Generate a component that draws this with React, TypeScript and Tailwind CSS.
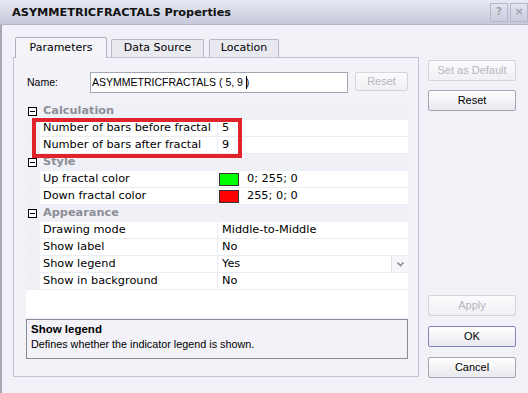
import React from "react";

const verdana = "font-['DejaVu_Sans',Verdana,sans-serif]";
const arial = "font-['Liberation_Sans',Arial,sans-serif]";

const Btn = ({ label, disabled, primary }: { label: string; disabled?: boolean; primary?: boolean }) => (
  <div
    className={`h-[21px] w-[88px] rounded-[2px] border flex items-center justify-center text-[11px] ${arial} ${
      disabled
        ? "border-[#d3d3dc] bg-gradient-to-b from-[#fbfbfd] to-[#f0f0f4] text-[#b6b6be]"
        : primary
        ? "border-[#8185bd] bg-gradient-to-b from-white to-[#e8e8f0] text-black"
        : "border-[#a3a5b3] bg-gradient-to-b from-white to-[#e8e8ee] text-black"
    }`}
  >
    {label}
  </div>
);

const Header = ({ title }: { title: string }) => (
  <div className="flex h-[17px] items-center bg-[#f0f0f7]">
    <div className="ml-[2px] flex h-[9px] w-[9px] items-center justify-center border border-black bg-white">
      <div className="h-px w-[5px] bg-black" />
    </div>
    <span className={`ml-[6px] text-[11.3px] font-bold text-[#8e8e96] ${verdana}`}>{title}</span>
  </div>
);

const Row = ({ name, children }: { name: string; children: React.ReactNode }) => (
  <div className="flex h-[17px] border-b border-[#ececf3]">
    <div className="w-[14px] bg-[#f0f0f7]" />
    <div className="w-[178px] border-r border-[#ececf3] bg-white pl-[3px] leading-[16px]">{name}</div>
    <div className="flex flex-1 items-center bg-white pl-[4px] leading-[16px]">{children}</div>
  </div>
);

const Swatch = ({ color }: { color: string }) => (
  <div className={`-ml-[3px] mr-[8px] h-[13px] w-[20px] border border-[#333] ${color}`} />
);

export default function App() {
  return (
    <div className="h-[393px] w-[528px] overflow-hidden bg-[#f1f1f7] text-black">
      {/* title bar */}
      <div className="flex h-[25px] items-center justify-between border-b border-[#b3b5c6] bg-gradient-to-b from-[#e8e9f2] to-[#c7c9dc]">
        <span className={`ml-[12px] pt-[2px] text-[11.3px] font-bold text-[#111] ${verdana}`}>
          ASYMMETRICFRACTALS Properties
        </span>
        <div className="flex gap-[2px] self-start pt-[3px]">
          <div className={`flex h-[19px] w-[18px] items-center justify-center border border-[#b5b7ca] text-[11px] font-bold text-[#a2a3b3] ${verdana}`}>
            ?
          </div>
          <div className={`flex h-[19px] w-[18px] items-center justify-center border border-[#b5b7ca] text-[11px] font-bold text-[#a2a3b3] ${verdana}`}>
            ×
          </div>
        </div>
      </div>

      <div className="flex h-[368px] border-l-2 border-[#a9a9b3]">
        {/* left column */}
        <div className="ml-[11px] mt-[12px] w-[406px]">
          {/* tabs */}
          <div className={`relative z-10 flex h-[21px] items-end text-[11px] ${verdana}`}>
            <div className="ml-[2px] flex h-[21px] w-[92px] items-center justify-center rounded-t-[2px] border border-b-0 border-[#aeb0c0] bg-[#f4f4f9]">
              Parameters
            </div>
            <div className="ml-[4px] mb-px flex h-[18px] w-[93px] items-center justify-center rounded-t-[2px] border border-b-0 border-[#b6b8c6] bg-[#e9e9f0]">
              Data Source
            </div>
            <div className="ml-[5px] mb-px flex h-[18px] w-[70px] items-center justify-center rounded-t-[2px] border border-b-0 border-[#b6b8c6] bg-[#e9e9f0]">
              Location
            </div>
          </div>

          {/* panel */}
          <div className="-mt-px h-[320px] border border-[#c3c4d0] bg-[#f2f2f8] pl-[12px] pt-[14px]">
            <div className="flex items-center">
              <span className={`ml-[1px] w-[63px] text-[10.5px] ${arial}`}>Name:</span>
              <div className={`flex h-[21px] w-[258px] items-center border border-[#a4a6b4] bg-white pl-[1px] text-[10.5px] ${arial}`}>
                ASYMMETRICFRACTALS ( 5, 9 )
                <span className="-ml-[3px] h-[13px] w-px bg-black" />
              </div>
              <div className={`ml-[7px] -mt-[2px] flex h-[19px] w-[53px] items-center justify-center rounded-[2px] border border-[#d3d3dc] bg-gradient-to-b from-[#fbfbfd] to-[#f0f0f4] text-[11px] text-[#b6b6be] ${arial}`}>
                Reset
              </div>
            </div>

            {/* property grid */}
            <div className={`relative mt-[10px] w-[382px] text-[11.3px] ${verdana}`}>
              <Header title="Calculation" />
              <Row name="Number of bars before fractal">5</Row>
              <Row name="Number of bars after fractal">9</Row>
              <Header title="Style" />
              <Row name="Up fractal color">
                <Swatch color="bg-[#00ff00]" />
                0; 255; 0
              </Row>
              <Row name="Down fractal color">
                <Swatch color="bg-[#ff0000]" />
                255; 0; 0
              </Row>
              <Header title="Appearance" />
              <Row name="Drawing mode">Middle-to-Middle</Row>
              <Row name="Show label">No</Row>
              <Row name="Show legend">
                <span className="flex-1">Yes</span>
                <div className="flex h-[16px] w-[17px] items-center justify-center border-l border-[#dcdce6] bg-[#f6f6fa]">
                  <svg width="7" height="5" viewBox="0 0 7 5">
                    <path d="M0.5 0.5 L3.5 3.5 L6.5 0.5" stroke="#8d8fa6" strokeWidth="1.6" fill="none" />
                  </svg>
                </div>
              </Row>
              <Row name="Show in background">No</Row>
              <div className="h-[27px] bg-white" />

              {/* annotation */}
              <div className="absolute left-[6px] top-[15px] h-[40px] w-[210px] border-4 border-[#e1232b]" />
            </div>

            {/* description */}
            <div className={`mt-[2px] h-[40px] w-[382px] border border-[#8a8a90] px-[4px] pt-[2px] ${arial}`}>
              <div className="text-[11.5px] font-bold leading-[15px]">Show legend</div>
              <div className="text-[10.8px] leading-[15px]">Defines whether the indicator legend is shown.</div>
            </div>
          </div>
        </div>

        {/* right column */}
        <div className="ml-[9px] mt-[35px] flex h-[318px] flex-col justify-between">
          <div className="flex flex-col gap-[9px]">
            <Btn label="Set as Default" disabled />
            <Btn label="Reset" />
          </div>
          <div className="flex flex-col gap-[10px]">
            <Btn label="Apply" disabled />
            <Btn label="OK" primary />
            <Btn label="Cancel" />
          </div>
        </div>
      </div>
    </div>
  );
}
